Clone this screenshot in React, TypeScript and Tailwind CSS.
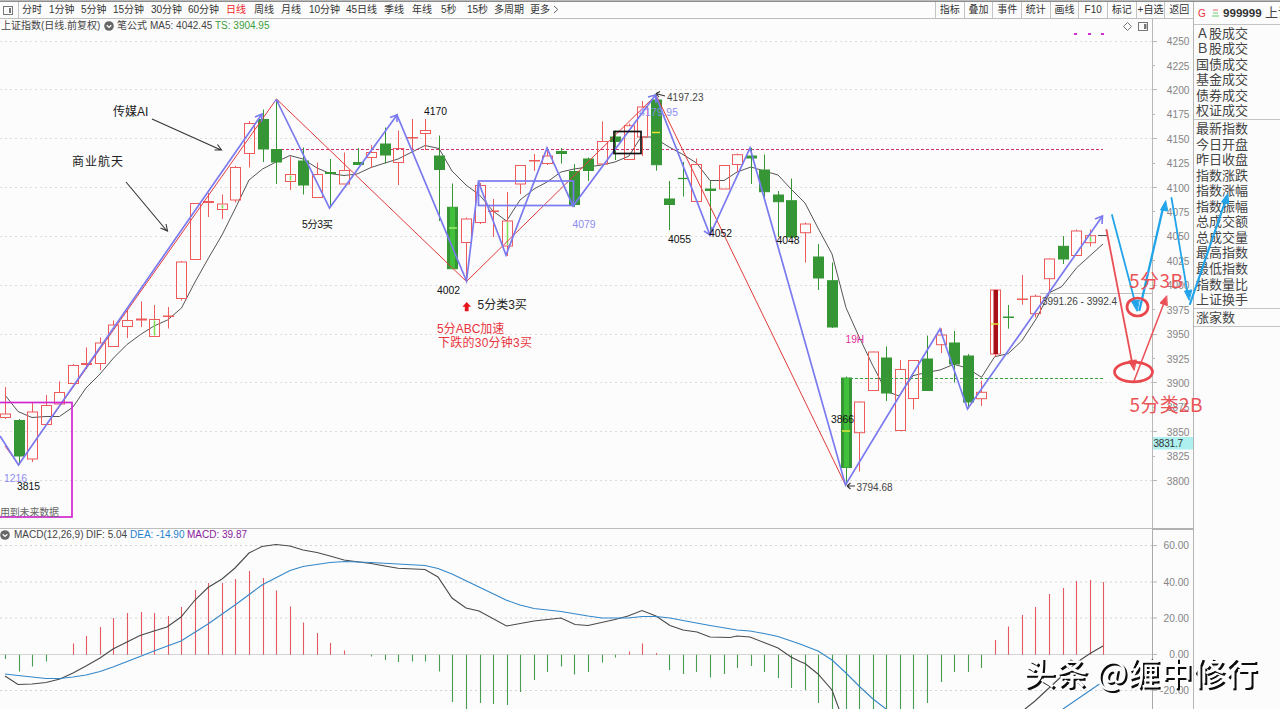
import { clsx } from 'clsx';

type Candle = [kind: string, high: number, top: number, bottom: number, low: number];

const FONT = "font-['Liberation_Sans','Noto_Sans_CJK_SC',sans-serif]";

const X0 = 5;
const STEP = 13.558;
const cx = (i: number) => Math.round(X0 + STEP * i) + 0.5;

// r = up (hollow), g = down (solid), b = bright down, c = doji up, d = doji down, x = hollow with green core, s = limit bar
const candles: Candle[] = [
  ['r', 387, 414, 417.5, 419], ['g', 419, 420.5, 456, 465], ['r', 403, 412, 459, 462], ['r', 395, 405.5, 424.5, 425],
  ['r', 381.5, 392.5, 404, 404], ['r', 364, 365.5, 383.5, 383.5], ['c', 347.5, 363, 365, 369], ['r', 337.5, 343, 363.5, 370],
  ['r', 320.5, 325, 346.5, 347], ['r', 310, 320.5, 326.5, 338], ['c', 301.5, 318.5, 320.5, 327], ['x', 305, 319.5, 336.5, 337],
  ['c', 307, 315.5, 317, 328.5], ['r', 261, 262, 298.5, 300.5], ['r', 203, 203.5, 259.5, 260], ['c', 193, 201, 203, 217],
  ['x', 194.5, 204, 209.5, 219], ['r', 166, 167.5, 200, 202.5], ['r', 121, 123.5, 153.5, 167.5], ['g', 109.5, 119.5, 149, 162],
  ['g', 99, 149.5, 162, 184], ['x', 156.5, 174.5, 181.5, 190], ['g', 147.5, 161, 185, 194.5], ['r', 162.5, 174.5, 197.5, 198],
  ['d', 159, 172, 174, 207], ['r', 152.5, 170.5, 184, 184], ['d', 148, 162, 165, 165], ['r', 145, 152.5, 157.5, 168],
  ['g', 127.5, 144, 155, 163.5], ['r', 130.5, 148.5, 162.5, 185], ['c', 119, 137, 138.5, 149], ['r', 119, 130.5, 133.5, 150],
  ['g', 135.5, 156, 169.5, 221], ['b', 183.5, 207.3, 268.7, 269], ['r', 217.5, 219, 242.5, 281.5], ['r', 183, 185.5, 222.5, 224],
  ['c', 199, 210.5, 212, 237], ['x', 192, 221, 246, 256], ['r', 165, 165.5, 184, 194], ['c', 154, 160, 161.5, 171],
  ['r', 147, 156, 163.5, 165], ['d', 148, 151, 154, 163.5], ['g', 164, 171.5, 204.5, 207], ['g', 157.5, 159, 170.5, 181],
  ['r', 121.5, 141.5, 164, 164], ['g', 130.5, 137, 141.5, 160], ['r', 123.5, 125.7, 159.5, 160], ['r', 101, 107, 137, 156],
  ['g', 95, 100, 164.7, 170.7], ['g', 181, 199, 204.5, 230], ['d', 162, 178, 179, 196.5], ['r', 158.5, 164.5, 201.5, 202],
  ['d', 181, 188.5, 191, 235], ['r', 165, 165.5, 189, 189], ['r', 153.5, 154.7, 164.5, 172], ['d', 147.7, 155.5, 158.5, 184],
  ['g', 154.5, 170, 191.7, 198.5], ['g', 191, 195, 201.7, 237], ['g', 178.5, 200.7, 237, 237], ['r', 222.5, 224, 232.7, 262.5],
  ['g', 244, 257, 278, 290], ['g', 262.5, 280.7, 327, 328], ['b', 376.5, 378, 467.5, 485], ['r', 401.5, 402, 432.7, 471.5],
  ['r', 351.5, 352, 390.5, 391], ['g', 346.5, 358, 393, 401], ['r', 360, 369.5, 430.5, 431], ['r', 360, 360.5, 398.5, 409.5],
  ['g', 335.5, 359, 390.5, 391], ['r', 328.5, 335, 344.7, 353], ['g', 331, 343, 364, 382.5], ['g', 354, 356, 402, 408.5],
  ['r', 380.7, 392.3, 398.7, 406], ['s', 289.5, 290, 354, 356.5], ['d', 305, 316.5, 318, 328.7], ['c', 275, 298.5, 300, 304.7],
  ['r', 294.5, 296.3, 313.7, 317.5], ['r', 258.5, 259, 278.7, 291.7], ['g', 236, 246.3, 259, 264], ['r', 229.5, 231, 255.5, 256],
  ['x', 229.5, 235.7, 242.7, 246.5],
];

// y coordinate of the free end of every histogram bar
const ZERO = 654.7;
const bars = [
  659, 671.5, 666.5, 661.5, 0, 643.5, 636, 627, 618, 613, 612, 613, 616, 607, 590, 583, 583, 579, 571, 578,
  590.5, 606.5, 622.5, 633, 643, 650.5, 0, 656.5, 660, 662, 661.5, 661.5, 671.5, 702, 712, 703, 704, 705, 692, 680,
  672, 666.5, 674.5, 672, 662.5, 657.5, 651.5, 643.5, 653, 670, 674, 672, 677.5, 674, 668, 666, 672, 678, 688, 690,
  703, 712, 712, 712, 712, 712, 712, 712, 703, 682, 672, 672, 668, 640, 626.5, 615, 607, 594, 588, 581, 580, 582,
];

const MA5 =
  '5,395 18,411.5 32,417.5 46,416.5 59.5,416.5 73,407 86,388 100,374 113.5,358 127,344.5 140.5,334.5 154,326 167.5,320 181.5,308 195,282 208.5,258 222,235 235,209 249,180 262.5,169 276,162 290,155.5 303,159 317,168 330,173.5 344,175.5 357,174 371,167.5 385,163 398,159 412,152 425,145.5 439,148.5 452,171 466,185 479.5,195 493,211 506.5,221 520,200 534,189 547,182 561,172 574,169 588,167 601.5,165 615,162 629,156 641,137 653,137 669,147 683,154.5 696.5,163 710,180.5 724,180.5 737,172 751,167 764,171 778,175 791,189 805,203 818.5,229 832,254 846,307.7 859,336.7 872,364 886,391 899,396 913,375.7 927,372.3 940,370 954,364.3 967,368 981.5,377.3 994.7,356.7 1008,353.7 1021.7,341 1036.5,318.3 1050,292.3 1061.7,286.7 1076.7,267.7 1103,244';

const DIF =
  '5,676 18,684.5 32,684 46,682.5 60,679 73,673 86,666 100,658 113,649 127,642 140,635.5 154,631 167,627 181,617 195,600 208,587.5 222,579 235,568 249,553 262,546.5 276,544.5 290,546 303,550 317,552.5 330,556 344,560 357,561.7 371,563.5 385,566 398,568.3 425,569.5 438,577 452,598 466,608 479,611 506.5,626 534,621 561,618 575,624.5 588,625.5 615,619.5 628,616 642,610.5 656,616 670,625.5 683,630 697,632 710,637 730,637.5 737,636 750,637 764,642.5 778,648 791,657 800,661.5 805,663.5 818,674 832,690 839,709';

const DEA =
  '5,674 18,675.5 32,677 46,678.5 60,678.5 73,677 86,675 100,671.5 113,667 140,656.5 154,651 181,641 208,624 235,605 262,585 290,570.5 303,566.5 330,562.5 345,561.5 371,562.5 398,564 425,565.5 438,568.5 452,574 479,587 506,600 520,605 534,608.5 561,611.5 588,616 602,618 628,618 642,616.5 656,616.5 670,618 683,620.5 710,625.5 737,630 750,631 764,633.5 778,636.5 800,644 818,651 832,660 846,673 860,687 873,699 886,709';

const periods = [
  { label: '分时', w: 'w-[27px]' }, { label: '1分钟', w: 'w-[32px]' }, { label: '5分钟', w: 'w-[32px]' },
  { label: '15分钟', w: 'w-[38px]' }, { label: '30分钟', w: 'w-[37px]' }, { label: '60分钟', w: 'w-[38px]' },
  { label: '日线', w: 'w-[28px]', active: true }, { label: '周线', w: 'w-[27px]' }, { label: '月线', w: 'w-[28px]' },
  { label: '10分钟', w: 'w-[37px]' }, { label: '45日线', w: 'w-[38px]' }, { label: '季线', w: 'w-[28px]' },
  { label: '年线', w: 'w-[29px]' }, { label: '5秒', w: 'w-[26px]' }, { label: '15秒', w: 'w-[27px]' },
  { label: '多周期', w: 'w-[36px]' }, { label: '更多', w: 'w-[22px]' },
];

const tools = ['指标', '叠加', '事件', '统计', '画线', 'F10', '标记', '+自选', '返回'];

const turnover = ['Ａ股成交', 'Ｂ股成交', '国债成交', '基金成交', '债券成交', '权证成交'];
const quotes = [
  '最新指数', '今日开盘', '昨日收盘', '指数涨跌', '指数涨幅', '指数振幅',
  '总成交额', '总成交量', '最高指数', '最低指数', '指数量比', '上证换手',
];

const prices = Array.from({ length: 19 }, (_, i) => ({ value: 4250 - i * 25, y: 41.5 + i * 24.42 }));
const macdLevels = [
  { label: '60.00', y: 545.5 }, { label: '40.00', y: 582 }, { label: '20.00', y: 618 },
  { label: '0.00', y: 654.5 }, { label: '-20.00', y: 690.5 },
];

function CandleMark({ i, c }: { i: number; c: Candle }) {
  const [kind, high, top, bottom, low] = c;
  const x = cx(i);
  const green = kind === 'g' || kind === 'b' || kind === 'd';
  const stroke = green ? '#369636' : '#ee5b5b';
  if (kind === 'c' || kind === 'd') {
    return (
      <g stroke={stroke}>
        <line x1={x} x2={x} y1={high} y2={low} />
        <line x1={x - 5.5} x2={x + 5.5} y1={(top + bottom) / 2} y2={(top + bottom) / 2} strokeWidth={Math.max(1.3, bottom - top)} />
      </g>
    );
  }
  return (
    <g stroke={stroke}>
      <line x1={x} x2={x} y1={high} y2={top} />
      <line x1={x} x2={x} y1={bottom} y2={low} />
      <rect x={x - 5} y={top} width={10} height={bottom - top} fill={green ? '#369636' : 'none'} />
      {kind === 'b' && <rect x={x - 2.5} y={top} width={5} height={bottom - top} fill="#41c13b" stroke="none" />}
      {kind === 'x' && <line x1={x} x2={x} y1={top + 1} y2={bottom - 1} stroke="#7ce04f" strokeWidth={1.5} />}
      {kind === 's' && <rect x={x - 2} y={top} width={4.5} height={bottom - top} fill="#a90f16" stroke="none" />}
    </g>
  );
}

function Arrow({ points }: { points: string }) {
  return <polyline points={points} fill="none" stroke="#7a7af0" strokeWidth={1.6} />;
}

function PriceChart() {
  return (
    <svg className="block h-[495px] w-[1193px]" viewBox="0 33 1193 495">
      <g stroke="#dcdcdc" strokeDasharray="2 3">
        {prices.filter((_, i) => i % 2 === 0).map((p) => (
          <line key={p.value} x1={0} x2={1152} y1={Math.round(p.y) - 0.5} y2={Math.round(p.y) - 0.5} />
        ))}
      </g>
      <g stroke="#b9b9b9">
        <line x1={1152.5} x2={1152.5} y1={33} y2={528} />
        {prices.map((p, i) => (
          <line key={p.value} x1={1152} x2={i % 2 ? 1155 : 1157} y1={Math.round(p.y) - 0.5} y2={Math.round(p.y) - 0.5} />
        ))}
      </g>
      <g fontSize={10.2} fill="#858585" textAnchor="end">
        {prices.map((p) => (
          <text key={p.value} x={1189.5} y={p.y + 3.6}>{p.value}</text>
        ))}
      </g>
      <rect x={1153} y={437} width={40} height={12.5} fill="#aef0f0" />
      <text x={1153.5} y={446.5} fontSize={10} fill="#333" textLength={29.5}>3831.7</text>

      <g fill="#d02fd0">
        <rect x={1074} y={33} width={3} height={2} />
        <rect x={1088} y={33} width={3} height={2} />
        <rect x={1101} y={33} width={3} height={2} />
      </g>

      <polyline points={MA5} fill="none" stroke="#555" />
      <line x1={276} x2={1103} y1={149.5} y2={149.5} stroke="#cc2f74" strokeWidth={1.1} strokeDasharray="3 2" />
      {candles.map((c, i) => <CandleMark key={i} i={i} c={c} />)}
      <line x1={1098} x2={1107} y1={235.5} y2={235.5} stroke="#555" />
      <g stroke="#e3e33a" strokeWidth={1.5}>
        <line x1={652} x2={660} y1={132.5} y2={132.5} />
        <line x1={842} x2={850} y1={431} y2={431} />
        <line x1={991} x2={999} y1={324} y2={324} />
        <line x1={449} x2={457} y1={228} y2={228} stroke="#9af06a" />
      </g>
      <line x1={850} x2={1103} y1={378.5} y2={378.5} stroke="#3da03d" strokeWidth={1.2} strokeDasharray="3 2" />
      <line x1={1040} x2={1152} y1={293.5} y2={293.5} stroke="#bdbdbd" />

      {/* segment and stroke lines */}
      <polyline points="5,446 18.5,464.5 276.5,99 466.5,281.5 656,95 845.5,485" fill="none" stroke="#e23b3b" />
      <polyline points="0,436 18.5,465 262,114" fill="none" stroke="#7a7af0" strokeWidth={1.7} />
      <polyline
        points="276.5,100 329.5,208 397,115 466.5,281 478.5,182 506,255 547,148 573,206 655.5,95 710,235 750,148 845.5,485 940,329 967.5,409 1102.5,216"
        fill="none"
        stroke="#7a7af0"
        strokeWidth={1.7}
      />
      <Arrow points="255,117 262,114 261.5,122" />
      <Arrow points="390,117.5 397,115 397,122" />
      <Arrow points="648,97 655.5,95 656,103" />
      <Arrow points="704,231 710,235 712,227" />
      <Arrow points="1095,219 1102.5,216 1102,224" />
      <path d="M276.5 99l-3 4M276.5 99l3 4" stroke="#7a7af0" />
      <rect x={478.5} y={181} width={95} height={24.5} fill="none" stroke="#7a7af0" strokeWidth={1.7} />
      <rect x={614} y={131.5} width={27} height={22} fill="none" stroke="#111" strokeWidth={1.7} />
      <rect x={-3} y={402.5} width={75} height={114.5} fill="none" stroke="#d026d0" strokeWidth={1.7} />

      {/* notes */}
      <g stroke="#333" fill="none" strokeWidth={1.1}>
        <path d="M152 119L221 150M214.5 150H221.5L217.5 144.5" />
        <path d="M126 182L167 231M160.5 228L167.5 231L166 224" />
        <path d="M656 93.5L665 96M656 93.5l4-2M656 93.5l3 3.5" />
        <path d="M847 486H855M847 486l3.5-3M847 486l3.5 3" />
      </g>
      <path d="M466.7 302l4.3 4.7h-2.4v4.5h-3.8v-4.5h-2.4z" fill="#e8141c" />
      <g fontSize={12} fill="#222">
        <text x={113} y={115.5}>传媒AI</text>
        <text x={72} y={166} textLength={51}>商业航天</text>
        <text x={477.5} y={309}>5分类3买</text>
      </g>
      <g fontSize={12} fill="#e83440">
        <text x={437} y={333}>5分ABC加速</text>
        <text x={438} y={346.5} textLength={94}>下跌的30分钟3买</text>
      </g>
      <g fontSize={10.4} fill="#111">
        <text x={302} y={227.5} textLength={31}>5分3买</text>
        <text x={424} y={115}>4170</text>
        <text x={437} y={293.5}>4002</text>
        <text x={668} y={243}>4055</text>
        <text x={709} y={236.5}>4052</text>
        <text x={776.5} y={244}>4048</text>
        <text x={831} y={422.5}>3866</text>
        <text x={17} y={490}>3815</text>
      </g>
      <g fontSize={10.4} fill="#8c8cf0">
        <text x={4} y={481.5}>1216</text>
        <text x={572.5} y={227.5}>4079</text>
        <text x={639} y={115.5} textLength={39}>4179.95</text>
      </g>
      <g fontSize={10} fill="#444">
        <text x={667} y={100.5} textLength={36.5}>4197.23</text>
        <text x={856.5} y={490.5} textLength={36}>3794.68</text>
        <text x={1042} y={305} textLength={75}>3991.26 - 3992.4</text>
        <text x={0} y={515.5} textLength={59} fill="#666">用到未来数据</text>
      </g>
      <text x={845.5} y={342.5} fontSize={10.2} fill="#e0309a">19H</text>
    </svg>
  );
}

function MacdChart() {
  return (
    <svg className="block h-[168px] w-[1193px]" viewBox="0 541 1193 168">
      {macdLevels.map((l) => (
        <g key={l.label}>
          <line x1={0} x2={1152} y1={l.y} y2={l.y} stroke="#d4d4d4" strokeDasharray={l.label === '0.00' ? undefined : '2 3'} />
          <line x1={1152} x2={1157} y1={l.y} y2={l.y} stroke="#b9b9b9" />
          <text x={1189} y={l.y + 3.7} fontSize={10.2} fill="#858585" textAnchor="end">{l.label}</text>
        </g>
      ))}
      <line x1={1152.5} x2={1152.5} y1={541} y2={709} stroke="#a9a9a9" />
      {bars.map((y, i) =>
        y === 0 ? null : (
          <line key={i} x1={cx(i)} x2={cx(i)} y1={ZERO} y2={y} stroke={y < ZERO ? '#e4595f' : '#4a9c50'} strokeWidth={1.1} />
        ),
      )}
      <g fill="none" strokeWidth={1.1}>
        <polyline points={DIF} stroke="#4a4a4a" />
        <polyline points="1025,709 1035,701 1049,688 1062,676 1076,663 1090,653.5 1103,646" stroke="#4a4a4a" />
        <polyline points={DEA} stroke="#3487c9" />
        <polyline points="1063,709 1098,685 1103,682" stroke="#3487c9" />
      </g>
    </svg>
  );
}

function Collapse() {
  return (
    <svg className="size-[10px] shrink-0" viewBox="0 0 10 10">
      <circle cx={5} cy={5} r={4.8} fill="#666" />
      <path d="M2.7 4.2L5 6.4L7.3 4.2" fill="none" stroke="#fff" strokeWidth={1.3} />
    </svg>
  );
}

function Toolbar() {
  return (
    <div className="flex h-[17px] shrink-0 items-stretch justify-between border-b border-[#bdbdbd] text-[10px] leading-[16px] text-[#333]">
      <div className="flex">
        <div className="mr-[3px] flex w-[19px] items-center border-r border-[#c4c4c4] pl-[3px]">
          <svg className="h-[9px] w-[10px]" viewBox="0 0 10 9">
            <rect x={0.5} y={0.5} width={9} height={8} fill="none" stroke="#777" />
            <rect x={6} y={2} width={2} height={5} fill="#777" />
          </svg>
        </div>
        {periods.map((p) => (
          <span key={p.label} className={clsx('shrink-0 whitespace-nowrap', p.w, p.active && 'text-[#f01c24]')}>
            {p.label}
          </span>
        ))}
        <svg className="mt-[3px] ml-px h-[9px] w-[6px]" viewBox="0 0 6 9">
          <path d="M1 1L4.8 4.5L1 8" fill="none" stroke="#666" />
        </svg>
      </div>
      <div className="grid w-[258px] grid-cols-9">
        {tools.map((t) => (
          <span key={t} className="border-l border-[#c4c4c4] text-center whitespace-nowrap">{t}</span>
        ))}
      </div>
    </div>
  );
}

function Sidebar() {
  return (
    <aside className="flex w-[87px] shrink-0 flex-col overflow-hidden border-l border-[#b5b5b5] text-[13px] text-[#444]">
      <div className="flex h-[23px] shrink-0 items-center border-b border-[#c4c4c4] pl-[4px] whitespace-nowrap">
        <span className="w-[14px] shrink-0 text-[10px] text-[#e8323a]">G</span>
        <svg className="mr-[4px] h-[8px] w-[7px] shrink-0" viewBox="0 0 7 8">
          <path d="M1 1H6" stroke="#e8626a" />
          <path d="M1 4H6M0 7H7" stroke="#5fcf6a" />
        </svg>
        <span className="w-[42px] shrink-0 text-[11.6px] font-bold text-[#333]">999999</span>
        <span className="shrink-0">上证指数</span>
      </div>
      <div className="border-b border-[#c4c4c4] pt-[0.5px]">
        {turnover.map((t) => (
          <div key={t} className="h-[15.6px] pl-[2px] leading-[15.6px] whitespace-nowrap">{t}</div>
        ))}
      </div>
      <div className="border-b border-[#c4c4c4] pt-[1px]">
        {quotes.map((t) => (
          <div key={t} className="h-[15.55px] pl-[2px] leading-[16px] whitespace-nowrap">{t}</div>
        ))}
      </div>
      <div className="h-[18px] border-b border-[#c4c4c4] pl-[2px] leading-[18px]">涨家数</div>
    </aside>
  );
}

// hand-drawn forecast that crosses the axis and the quote panel
function Forecast() {
  return (
    <svg className="pointer-events-none absolute inset-0 h-[709px] w-[1280px]" viewBox="0 0 1280 709">
      <g stroke="#22a4ea" fill="#22a4ea" strokeLinecap="round">
        <path d="M1112 215L1135 302" strokeWidth={1.8} />
        <path d="M1137 311L1131 300.5L1139 300z" />
        <path d="M1139.5 310L1163 208" strokeWidth={2.3} />
        <path d="M1165.5 201L1160.5 210L1167.5 211z" />
        <path d="M1171.5 198L1187.5 293" strokeWidth={1.8} />
        <path d="M1189 300L1184.5 291L1191.5 290z" />
        <path d="M1190 304L1225 202" strokeWidth={2.2} />
        <path d="M1227.5 194L1221.5 202L1228.5 204z" />
      </g>
      <g stroke="#ea4f55" fill="#ea4f55" strokeLinecap="round">
        <path d="M1106.5 230L1132 362" strokeWidth={1.8} />
        <path d="M1134 370L1128.5 361L1136 360z" />
        <path d="M1134 381L1164 303" strokeWidth={1.5} />
        <path d="M1166.5 296L1160 303L1167 305.5z" />
      </g>
      <g fill="none" stroke="#e8484e" strokeWidth={2.7}>
        <ellipse cx={1137.5} cy={307} rx={10.5} ry={9} />
        <ellipse cx={1133.5} cy={372} rx={19} ry={9.8} />
      </g>
      <g className="font-['Noto_Sans_CJK_SC',sans-serif]" fontSize={19} fill="#ea5358">
        <text x={1129} y={287.5} textLength={54}>5分3B</text>
        <text x={1129.5} y={411.5} textLength={73}>5分类2B</text>
      </g>
      <text
        className="font-['Noto_Sans_CJK_SC',sans-serif] font-medium [filter:drop-shadow(2px_2px_0_#0c0c0c)]"
        x={1023.5}
        y={684.5}
        fontSize={32}
        textLength={234}
        fill="#fcfcfc"
      >
        头条 @缠中修行
      </text>
    </svg>
  );
}

export default function App() {
  return (
    <div className={clsx('relative flex h-[709px] w-[1280px] flex-col overflow-hidden bg-[#fcfcfc]', FONT)}>
      <div className="h-[2px] shrink-0 border-b border-[#8d8d8d] bg-[#b9b9b9]" />
      <div className="flex min-h-0 flex-1">
        <main className="flex w-[1193px] shrink-0 flex-col">
          <Toolbar />
          <div className="flex h-[14px] shrink-0 text-[10px] leading-[12px] whitespace-nowrap text-[#444]">
            <div className="flex w-[1152px] items-center justify-between">
              <div className="flex items-center pl-[1px]">
                <span className="w-[103px]">上证指数(日线.前复权)</span>
                <Collapse />
                <span className="ml-[3px] w-[33px]">笔公式</span>
                <span className="w-[65px]">MA5: 4042.45</span>
                <span className="text-[#3a9c3a]">TS: 3904.95</span>
              </div>
              <svg className="mr-[2px] h-[11px] w-[27px]" viewBox="0 0 27 11">
                <path d="M4.5 1.5L8.5 5.5L4.5 9.5L0.5 5.5z" fill="none" stroke="#777" />
                <rect x={15.5} y={1.5} width={9} height={8} fill="none" stroke="#777" />
                <rect x={21} y={3} width={2.5} height={5} fill="#777" />
              </svg>
            </div>
            <div className="w-[41px] border-l border-[#b9b9b9]" />
          </div>
          <PriceChart />
          <div className="flex h-[13px] shrink-0 text-[10px] leading-[12px] whitespace-nowrap text-[#444]">
            <div className="flex w-[1152px] items-center border-t border-[#bdbdbd]">
              <Collapse />
              <span className="ml-[4px] w-[72px]">MACD(12,26,9)</span>
              <span className="w-[44px]">DIF: 5.04</span>
              <span className="w-[57px] text-[#1f83cf]">DEA: -14.90</span>
              <span className="text-[#8a1a9a]">MACD: 39.87</span>
            </div>
            <div className="w-[41px] border-t-2 border-l border-[#b0b0b0]" />
          </div>
          <MacdChart />
        </main>
        <Sidebar />
      </div>
      <Forecast />
    </div>
  );
}
